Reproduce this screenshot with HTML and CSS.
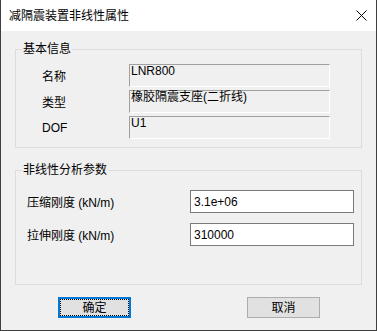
FILE: index.html
```html
<!DOCTYPE html>
<html lang="zh-CN">
<head>
    <meta charset="UTF-8">
    <title>减隔震装置非线性属性</title>
    <link rel="stylesheet" href="styles.css">
</head>
<body>
    <div class="dialog">
        <!-- Заголовок окна -->
        <div class="title-bar">
            <span class="title">减隔震装置非线性属性</span>
            <svg class="close" width="11" height="11" viewBox="0 0 11 11">
                <path d="M0.5 0.5 L10.5 10.5 M10.5 0.5 L0.5 10.5" stroke="#000" stroke-width="1" fill="none"/>
            </svg>
        </div>

        <div class="dialog-body">
            <fieldset class="group">
                <legend>基本信息</legend>
                <div class="rows rows-info">
                    <div class="row">
                        <span class="label">名称</span>
                        <span class="field">LNR800</span>
                    </div>
                    <div class="row">
                        <span class="label">类型</span>
                        <span class="field">橡胶隔震支座(二折线)</span>
                    </div>
                    <div class="row">
                        <span class="label">DOF</span>
                        <span class="field">U1</span>
                    </div>
                </div>
            </fieldset>

            <fieldset class="group group-params">
                <legend>非线性分析参数</legend>
                <div class="rows rows-params">
                    <div class="row">
                        <label class="label" for="compress">压缩刚度 (kN/m)</label>
                        <input type="text" id="compress" value="3.1e+06">
                    </div>
                    <div class="row">
                        <label class="label" for="tension">拉伸刚度 (kN/m)</label>
                        <input type="text" id="tension" value="310000">
                    </div>
                </div>
            </fieldset>

            <div class="buttons">
                <button class="btn btn-default">确定</button>
                <button class="btn">取消</button>
            </div>
        </div>
    </div>
</body>
</html>
```

FILE: styles.css
```css
body {
    margin: 0;
    font-family: "Liberation Sans", "Noto Sans CJK SC", sans-serif;
    font-size: 12px;
    color: #000;
    background-color: #f0f0f0;
}

.dialog {
    width: 377px;
    height: 331px;
    box-sizing: border-box;
    border: 1px solid #3f3f3f;
    border-top: none;
    background-color: #f0f0f0;
    display: flex;
    flex-direction: column;
}

/* Заголовок */
.title-bar {
    height: 31px;
    background-color: #fff;
    display: flex;
    align-items: center;
    justify-content: space-between;
    padding: 0 9px 0 8px;
}

.title {
    font-size: 12px;
    line-height: 16px;
}

.close {
    display: block;
}

.dialog-body {
    display: flex;
    flex-direction: column;
    padding-top: 10px;
}

/* Группы */
.group {
    margin: 0 14px;
    border: 1px solid #dcdcdc;
    padding: 0;
    min-width: 0;
}

.group legend {
    margin-left: 6px;
    padding: 0 1px;
    font-size: 12px;
    line-height: 16px;
}

.group-params {
    margin-top: 14px;
}

.rows {
    display: flex;
    flex-direction: column;
}

.rows-info {
    padding: 7px 0 8px 26px;
    gap: 3px;
}

.rows-params {
    padding: 12px 0 38px 11px;
    gap: 10px;
}

.row {
    display: flex;
    align-items: center;
    height: 23px;
}

.rows-info .label {
    width: 87px;
}

.rows-params .label {
    width: 163px;
}

.field {
    width: 201px;
    height: 23px;
    box-sizing: border-box;
    border-top: 1px solid #a0a0a0;
    border-left: 1px solid #a0a0a0;
    border-bottom: 1px solid #fff;
    border-right: 1px solid #fff;
    padding-left: 1px;
    line-height: 12px;
    font-size: 12px;
    align-self: flex-start;
}

input {
    width: 164px;
    height: 23px;
    box-sizing: border-box;
    border: 1px solid #7a7a7a;
    background-color: #fff;
    padding: 0 3px;
    margin: 0;
    font-family: "Liberation Sans", "Noto Sans CJK SC", sans-serif;
    font-size: 12px;
    color: #000;
    outline: none;
}

/* Кнопки */
.buttons {
    display: flex;
    gap: 116px;
    padding-left: 57px;
    margin-top: 12px;
}

.btn {
    width: 73px;
    height: 21px;
    box-sizing: border-box;
    border: 1px solid #adadad;
    background-color: #e1e1e1;
    font-family: "Liberation Sans", "Noto Sans CJK SC", sans-serif;
    font-size: 12px;
    color: #000;
    padding: 0;
    line-height: 16px;
}

.btn-default {
    border: 2px solid #0078d7;
    outline: 1px dotted #000;
    outline-offset: -3px;
}
```
